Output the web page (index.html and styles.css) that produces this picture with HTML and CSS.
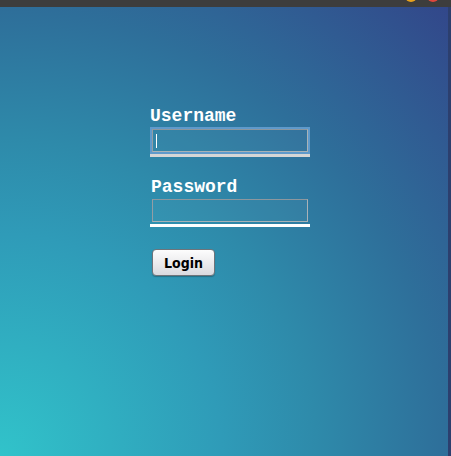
FILE: index.html
```html
<!DOCTYPE html>
<html>
<head>
<meta charset="utf-8">
<link rel="stylesheet" href="styles.css">
</head>
<body>
<div class="page">
  <div class="topbar">
    <span class="dot dot-orange"></span>
    <span class="dot dot-red"></span>
  </div>
  <div class="main">
    <form class="login">
      <label class="label">Username</label>
      <div class="field field-focus"><span class="caret"></span></div>
      <div class="bar bar-grey"></div>
      <label class="label label-pass">Password</label>
      <div class="field field-pass"></div>
      <div class="bar"></div>
      <button type="button" class="btn">Login</button>
    </form>
  </div>
</div>
</body>
</html>
```
FILE: styles.css
```css
html, body {
  margin: 0;
  padding: 0;
}
body {
  width: 451px;
  height: 456px;
  overflow: hidden;
  font-family: "Liberation Mono", monospace;
}
.page {
  display: flex;
  flex-direction: column;
  height: 456px;
}
.topbar {
  height: 7px;
  background: #3d3d3d;
  display: flex;
  justify-content: flex-end;
  gap: 10px;
  padding-right: 12px;
  overflow: hidden;
}
.dot {
  width: 12px;
  height: 12px;
  border-radius: 50%;
  margin-top: -10px;
}
.dot-orange { background: #e8a21c; }
.dot-red { background: #e0473d; }
.main {
  flex: 1;
  background: radial-gradient(circle farthest-corner at 0% 100%, #31c3ca 0%, #2f9bb8 35%, #2e8aaa 50%, #2e6f9a 70%, #32478a 100%);
  border-right: 3px solid #2c3f6e;
  padding: 99px 0 0 150px;
}
.login {
  display: flex;
  flex-direction: column;
  align-items: flex-start;
  width: 160px;
}
.label {
  color: #fff;
  font-weight: bold;
  font-size: 18px;
  line-height: 20px;
}
.label-pass {
  margin-top: 20px;
  margin-left: 1px;
}
.field {
  margin-top: 3px;
  margin-left: 2px;
  width: 156px;
  height: 23px;
  box-sizing: border-box;
  border: 1px solid #a9b2b7;
  border-top-color: #8c979e;
  border-left-color: #939da4;
  background: rgba(255, 255, 255, 0.03);
  display: flex;
  align-items: center;
  padding-left: 3px;
}
.field-pass {
  margin-top: 2px;
}
.field-focus {
  outline: 2px solid #5f9acb;
  outline-offset: 0;
}
.caret {
  width: 1px;
  height: 14px;
  background: #fff;
}
.bar {
  width: 160px;
  height: 3px;
  margin-top: 2px;
  background: #fff;
}
.bar-grey {
  background: #d6d6d6;
}
.btn {
  margin-top: 22px;
  margin-left: 2px;
  width: 63px;
  height: 27px;
  border: 1px solid #6f747a;
  border-radius: 4px;
  background: linear-gradient(#fdfdfd, #ececee 50%, #d9dadf);
  font-family: "DejaVu Sans Condensed", "DejaVu Sans", sans-serif;
  font-stretch: condensed;
  font-weight: bold;
  font-size: 14px;
  color: #000;
  padding: 0;
  box-shadow: 0 1px 1px rgba(0, 0, 0, 0.25);
}
```
